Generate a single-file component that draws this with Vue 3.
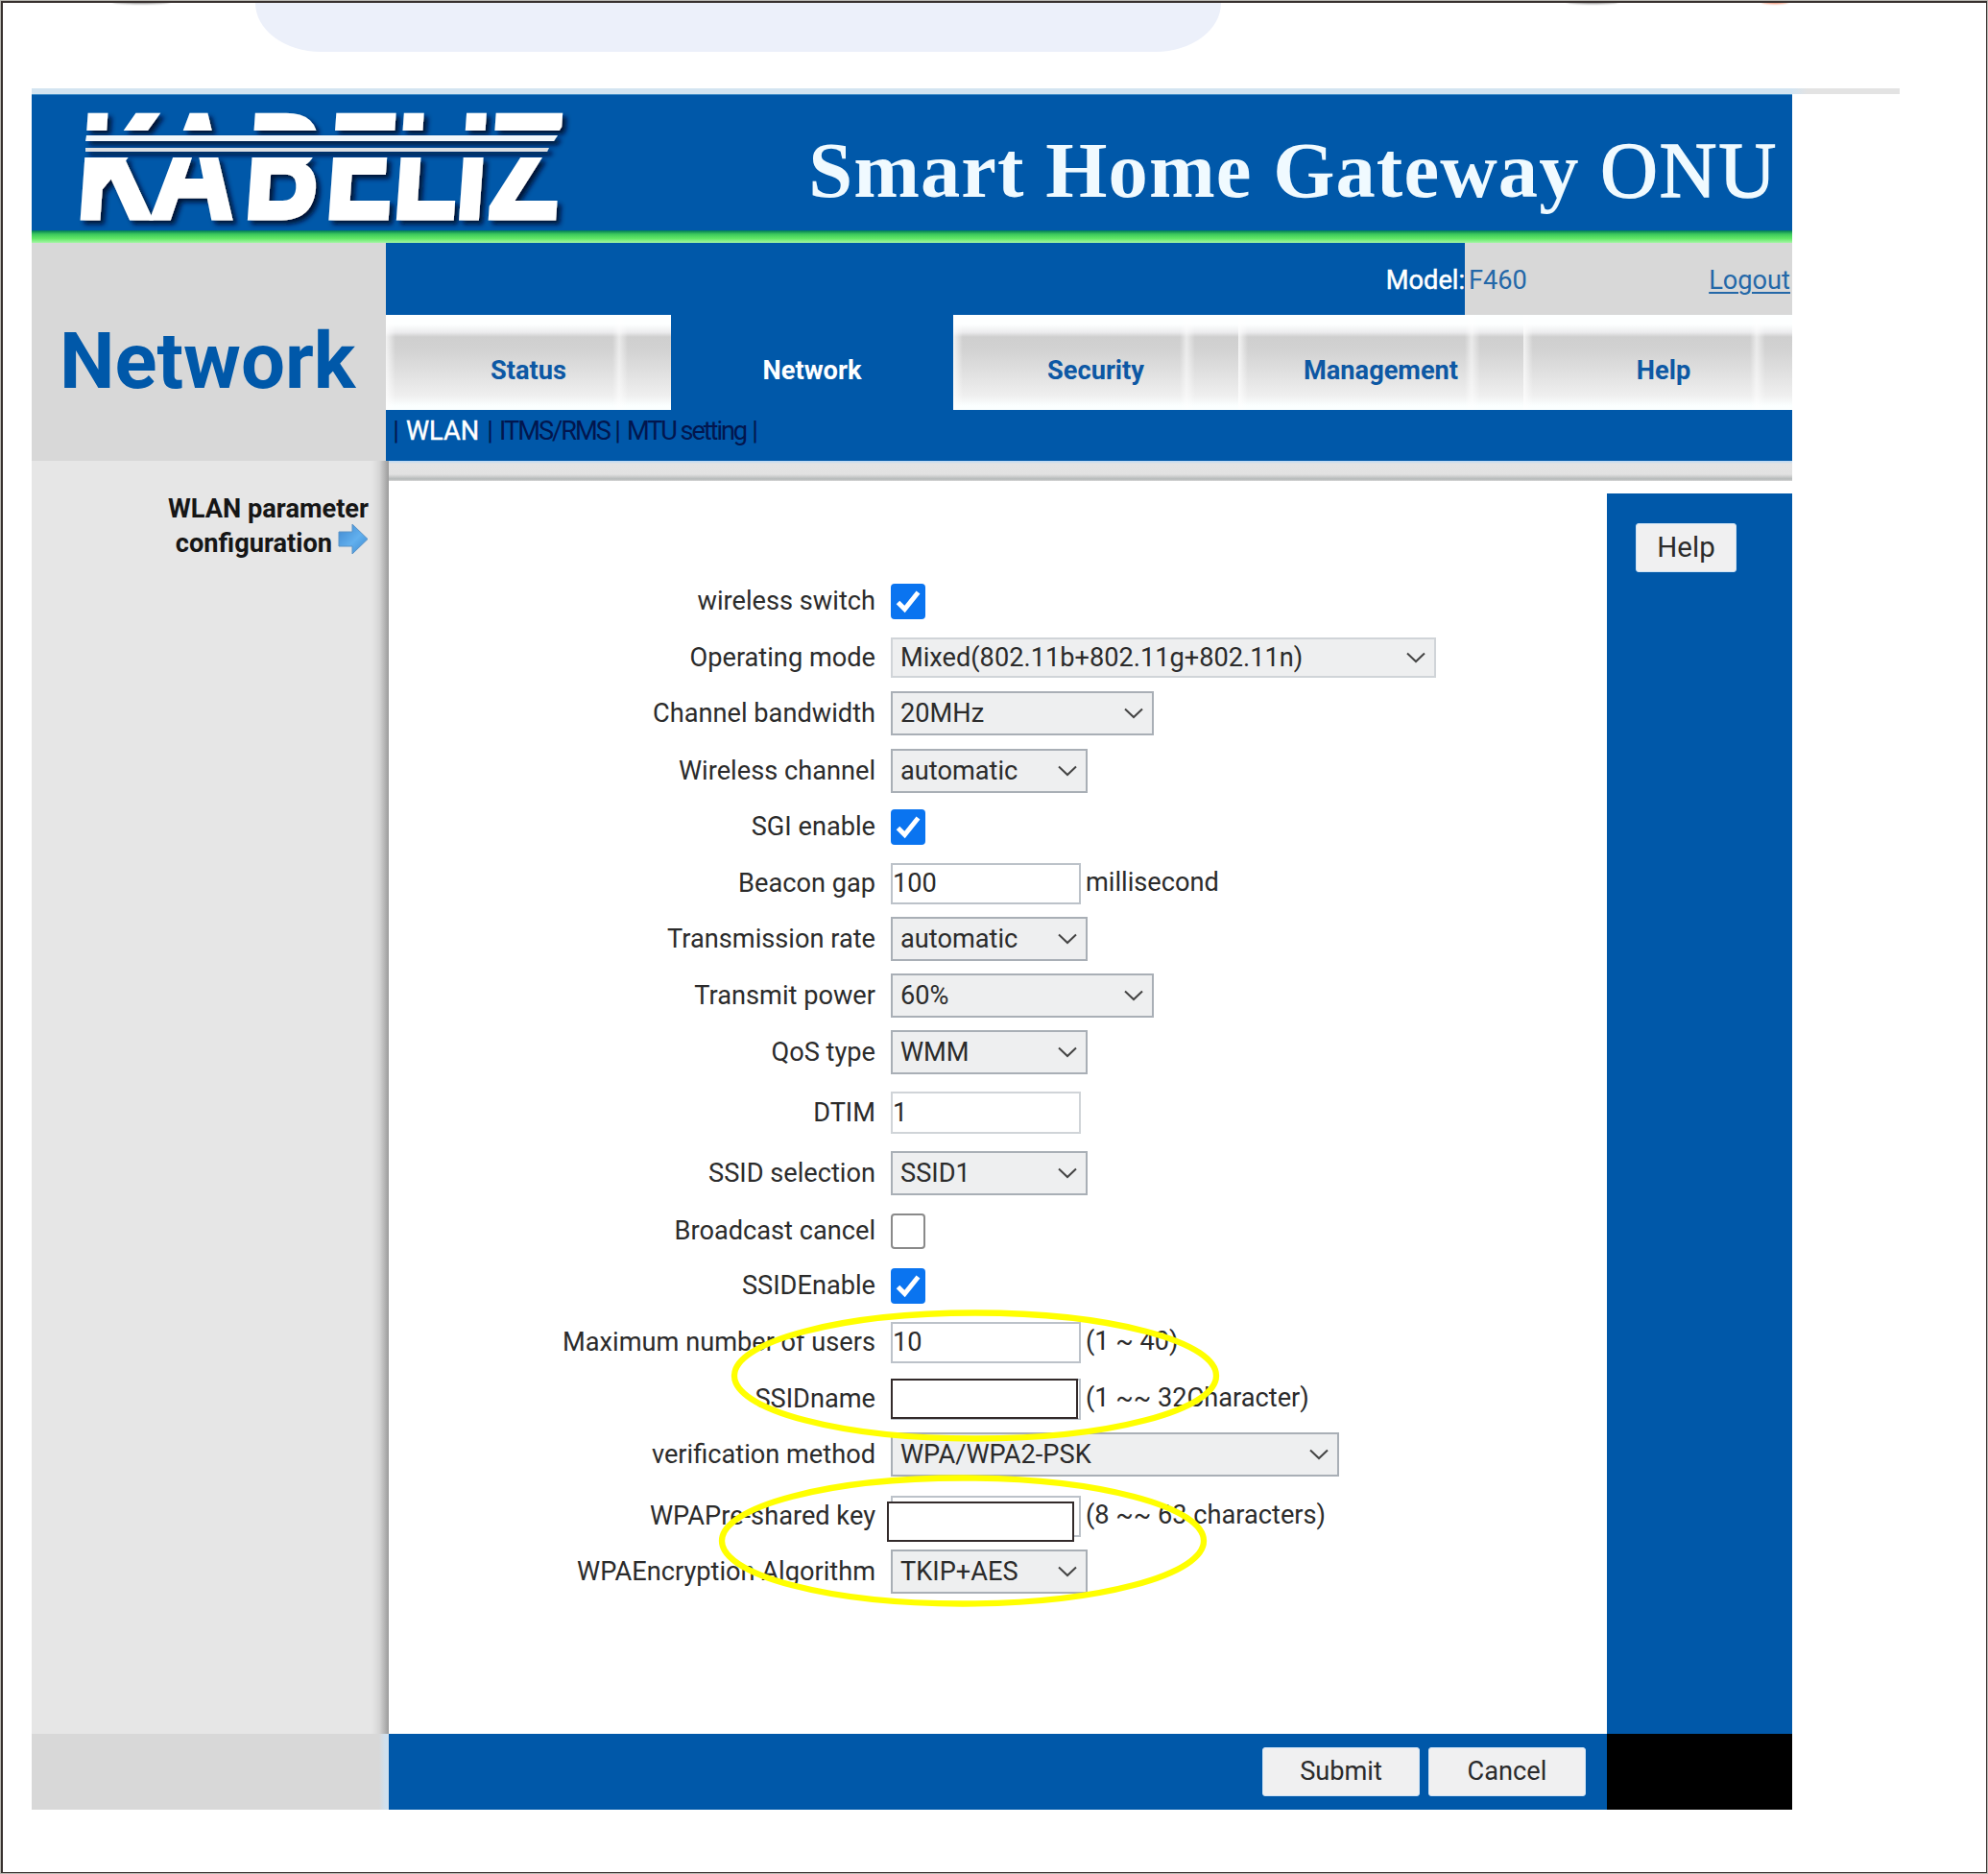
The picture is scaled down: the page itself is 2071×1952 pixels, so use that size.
<script setup>
const tabs = [
  { name: 'Status' },
  { name: 'Network', active: true },
  { name: 'Security' },
  { name: 'Management' },
  { name: 'Help' },
]

// gap: space above the row; every row is 46px tall
const rows = [
  { label: 'wireless switch', type: 'check', on: true, gap: 0 },
  { label: 'Operating mode', type: 'select', value: 'Mixed(802.11b+802.11g+802.11n)', width: 568, height: 42, gap: 13, soft: true },
  { label: 'Channel bandwidth', type: 'select', value: '20MHz', width: 274, gap: 12 },
  { label: 'Wireless channel', type: 'select', value: 'automatic', width: 205, gap: 14 },
  { label: 'SGI enable', type: 'check', on: true, gap: 12 },
  { label: 'Beacon gap', type: 'input', value: '100', note: 'millisecond', gap: 13 },
  { label: 'Transmission rate', type: 'select', value: 'automatic', width: 205, gap: 12 },
  { label: 'Transmit power', type: 'select', value: '60%', width: 274, gap: 13 },
  { label: 'QoS type', type: 'select', value: 'WMM', width: 205, gap: 13 },
  { label: 'DTIM', type: 'input', value: '1', height: 44, gap: 17, soft: true },
  { label: 'SSID selection', type: 'select', value: 'SSID1', width: 205, gap: 17 },
  { label: 'Broadcast cancel', type: 'check', on: false, gap: 14 },
  { label: 'SSIDEnable', type: 'check', on: true, gap: 11 },
  { label: 'Maximum number of users', type: 'input', value: '10', note: '(1 ~ 40)', gap: 13 },
  { label: 'SSIDname', type: 'input', value: '', note: '(1 ~~ 32Character)', gap: 13 },
  { label: 'verification method', type: 'select', value: 'WPA/WPA2-PSK', width: 467, gap: 12 },
  { label: 'WPAPre-shared key', type: 'input', value: '', note: '(8 ~~ 63 characters)', gap: 18 },
  { label: 'WPAEncryption Algorithm', type: 'select', value: 'TKIP+AES', width: 205, gap: 12 },
]

function controlSize(row) {
  return {
    width: (row.width || 198) + 'px',
    height: (row.height || (row.type === 'select' ? 46 : 43)) + 'px',
  }
}
</script>

<template>
  <div class="frame">
    <div class="chrome">
      <div class="omnibox"></div>
      <i class="smudge s1"></i>
      <i class="smudge s2"></i>
      <i class="smudge s3"></i>
    </div>
    <div class="rule"></div>

    <div class="site">
      <header class="banner">
        <svg class="logo" width="560" height="141" viewBox="0 0 560 141">
          <defs>
            <clipPath id="bands">
              <rect x="0" y="18" width="560" height="19" />
              <rect x="0" y="65" width="560" height="66" />
            </clipPath>
            <filter id="cast" x="-5%" y="-10%" width="110%" height="130%">
              <feDropShadow dx="4" dy="4" stdDeviation="2.6" flood-color="#00112e" flood-opacity="0.95" />
            </filter>
          </defs>
          <g filter="url(#cast)" fill="#fff">
            <g clip-path="url(#bands)">
              <text class="wordmark" transform="translate(0 128.5) skewX(-4.1) scale(.82 1)" x="8.5 106 221 324 410 488 531" y="0">KABELIZ</text>
            </g>
            <path d="M20 42H511L507 48H19Z" fill="#f2f7fb" />
            <path d="M19 55H502L500 59H19Z" fill="#dcdfe2" />
          </g>
        </svg>
        <h1>Smart Home Gateway <span class="onu">ONU</span></h1>
      </header>
      <div class="green"></div>

      <div class="top">
        <div class="section-title">Network</div>
        <div class="nav">
          <div class="info">
            <div class="model">Model:</div>
            <div class="account">
              <span>F460</span>
              <a>Logout</a>
            </div>
          </div>
          <div class="tabs">
            <div v-for="t in tabs" :key="t.name" class="tab" :class="{ active: t.active }">{{ t.name }}</div>
          </div>
          <div class="subnav">
            <span class="bar">|</span><span class="current">WLAN</span><span class="bar">|</span><span class="tight itms">ITMS/RMS</span><span class="bar">|</span><span class="tight mtu">MTU setting</span><span class="bar">|</span>
          </div>
        </div>
      </div>

      <div class="body">
        <aside class="side">
          <div class="side-item">WLAN parameter</div>
          <div class="side-item">
            configuration
            <svg width="32" height="33" viewBox="0 0 32 33">
              <defs>
                <linearGradient id="arrow" x1="0" x2="1" y1="0" y2="1">
                  <stop offset="0" stop-color="#3f87cf" />
                  <stop offset=".55" stop-color="#62b0ee" />
                  <stop offset="1" stop-color="#3a86cd" />
                </linearGradient>
              </defs>
              <path d="M1 9H15V1L31 16.500L15 32V24H1Z" fill="url(#arrow)" stroke="#5b93c6" stroke-width="1" />
            </svg>
          </div>
        </aside>
        <div class="main">
          <div class="band"></div>
          <div class="columns">
            <div class="form">
              <div v-for="r in rows" :key="r.label" class="row" :style="{ marginTop: r.gap + 'px' }">
                <div class="label">{{ r.label }}</div>
                <span v-if="r.type === 'check'" class="check" :class="{ on: r.on }">
                  <svg v-if="r.on" width="36" height="37" viewBox="0 0 36 37">
                    <path d="M7.500 19.500L14.500 26.500L28.500 9" fill="none" stroke="#fff" stroke-width="5" />
                  </svg>
                </span>
                <span v-else-if="r.type === 'select'" class="select" :class="{ soft: r.soft }" :style="controlSize(r)">
                  <span>{{ r.value }}</span>
                  <svg width="20" height="12" viewBox="0 0 20 12">
                    <path d="M1 1.500L10 10L19 1.500" fill="none" stroke="#444" stroke-width="2" />
                  </svg>
                </span>
                <span v-else class="input" :class="{ soft: r.soft }" :style="controlSize(r)">{{ r.value }}</span>
                <span v-if="r.note" class="note">{{ r.note }}</span>
              </div>
            </div>
            <div class="help-col">
              <div class="btn help">Help</div>
            </div>
          </div>
        </div>
      </div>

      <footer class="foot">
        <div class="foot-left"></div>
        <div class="actions">
          <div class="btn">Submit</div>
          <div class="btn">Cancel</div>
        </div>
        <div class="foot-right"></div>
      </footer>
    </div>

    <!-- annotations over the page -->
    <div class="cover c1"></div>
    <div class="cover c2"></div>
    <svg class="ring r1" width="510" height="140" viewBox="0 0 510 140">
      <ellipse cx="255" cy="70" rx="251" ry="65.500" />
    </svg>
    <svg class="ring r2" width="510" height="140" viewBox="0 0 510 140">
      <ellipse cx="255" cy="70" rx="251" ry="65.500" />
    </svg>
  </div>
</template>

<style>
body {
  background: #fff;
}
</style>

<style scoped>
* {
  box-sizing: border-box;
}
.frame {
  position: relative;
  width: 2071px;
  height: 1952px;
  overflow: hidden;
  background: #fff;
  border: 3px solid #37302e;
  border-width: 3px 2px 2px 3px;
  outline: 1px solid #b9b8b2;
  outline-offset: -1px;
  font-family: Roboto, sans-serif;
  font-size: 27.200px;
  color: #2b2b2b;
  white-space: nowrap;
}
.chrome {
  position: relative;
  height: 89px;
  overflow: hidden;
}
.omnibox {
  width: 1006px;
  height: 51px;
  margin-left: 263px;
  background: #ecf0fa;
  border-radius: 0 0 88px 88px / 0 0 66px 66px;
}
.smudge {
  position: absolute;
  top: -4px;
  height: 5px;
  border-radius: 50%;
  background: #8a8a8a;
  filter: blur(1px);
}
.s1 { left: 114px; width: 60px; }
.s2 { left: 1629px; width: 54px; }
.s3 { left: 1832px; width: 28px; background: #f0825e; }
.rule {
  height: 6px;
  width: 1946px;
  margin-left: 30px;
  background: linear-gradient(90deg, #d3e4f1 1834px, #e3e3e3 1850px);
}
.site {
  width: 1834px;
  margin-left: 30px;
}
.banner {
  display: flex;
  justify-content: space-between;
  height: 142px;
  padding: 0 15px 0 37px;
  background: #0058a9;
  border-top: 1px solid #3f8cc6;
}
.logo {
  display: block;
}
.wordmark {
  font: 700 153px Roboto, sans-serif;
  stroke: #fff;
  stroke-width: 3px;
}
h1 {
  margin: 0;
  padding-top: 31px;
  font: 700 82.500px/94px "Liberation Serif", serif;
  letter-spacing: 1.100px;
  color: #f0faff;
}
.onu {
  font-weight: 400;
  letter-spacing: 2px;
  -webkit-text-stroke: 1.600px #f0faff;
}
.green {
  height: 13px;
  background: linear-gradient(#007a58, #3cc85c 30%, #62e866 65%, #a4f6a4);
}
.top {
  display: flex;
  height: 227px;
}
.section-title {
  width: 369px;
  padding: 76px 0 0 29px;
  background: #d8d8d8;
  color: #0058a9;
  font-size: 81.500px;
  line-height: 94px;
  font-weight: 700;
}
.nav {
  width: 1465px;
  background: #0058a9;
}
.info {
  display: flex;
  height: 75px;
  line-height: 79px;
}
.model {
  width: 1124px;
  text-align: right;
  color: #fff;
  -webkit-text-stroke: 0.500px #fff;
}
.account {
  flex: 1;
  display: flex;
  justify-content: space-between;
  padding: 0 2px 0 4px;
  background: #d8d8d8;
  color: #2468a8;
}
.account a {
  text-decoration: underline;
  text-decoration-thickness: 2px;
  text-underline-offset: 3px;
}
.tabs {
  display: flex;
  height: 99px;
  overflow: hidden;
}
.tab {
  flex: 0 0 297px;
  padding-top: 1px;
  line-height: 115px;
  text-align: center;
  font-weight: 700;
  color: #0d58a4;
  background:
    linear-gradient(90deg, #ffffffc0 0, #fff0 10px, #fff0 236px, #ffffff90 243px, #fff0 252px, #fff0 100%),
    linear-gradient(#fdffff 0 10px, #ececee 18px, #cfcfcf 23px, #d2d2d2 36px, #e0e0e0 60px, #efefef 84px, #fbffff 95px);
}
.tab.active {
  flex-basis: 294px;
  background: #0058a9;
  color: #fff;
}
.tab:last-child {
  padding-right: 5px;
}
.subnav {
  display: flex;
  height: 53px;
  padding-left: 7px;
  line-height: 45px;
  color: #02164e;
}
.subnav .bar {
  width: 7px;
  text-align: center;
}
.current {
  width: 76px;
  margin: 0 8px 0 7px;
  color: #fff;
  -webkit-text-stroke: 0.400px #fff;
}
.itms {
  width: 116px;
  margin: 0 4px 0 6px;
  letter-spacing: -2px;
}
.mtu {
  width: 126px;
  margin: 0 4px 0 6px;
  letter-spacing: -2.100px;
}
.body {
  display: flex;
  height: 1326px;
}
.side {
  width: 372px;
  padding: 32px 21px 0 0;
  font-weight: 700;
  color: #161616;
  background: linear-gradient(90deg, #e6e6e6 354px, #d6d6d6 362px, #9b9b9b 372px);
}
.side-item {
  display: flex;
  justify-content: flex-end;
  gap: 6px;
  height: 36px;
  line-height: 36px;
}
.side-item svg {
  display: block;
  margin-top: -3px;
}
.main {
  width: 1462px;
}
.band {
  height: 21px;
  background: linear-gradient(#b9d8f5, #e3e3e3 3px, #e2e2e2 14px, #b4b8b8 19px, #d9d9d9 21px);
}
.columns {
  display: flex;
  height: 1305px;
}
.form {
  width: 1269px;
  padding-top: 102px;
}
.row {
  display: flex;
  align-items: center;
  height: 46px;
}
.label {
  width: 507px;
  margin-right: 16px;
  text-align: right;
}
.check {
  display: block;
  width: 36px;
  height: 37px;
  border: 2px solid #8a8a8a;
  border-radius: 4px;
  background: #fff;
}
.check.on {
  border: 0;
  background: #0a74f0;
}
.check svg {
  display: block;
}
.select,
.input {
  display: flex;
  align-items: center;
  justify-content: space-between;
  border: 2px solid #a9afb6;
}
.select {
  padding: 0 9px 0 8px;
  background: #eeeff0;
}
.input {
  padding-left: 0;
  background: #fff;
  border-color: #bcc2c9;
}
.soft {
  border-color: #d0d4d8;
}
.note {
  margin: -3px 0 0 5px;
}
.help-col {
  width: 193px;
  margin-top: 13px;
  padding: 31px 0 0 30px;
  background: #0058a9;
}
.btn {
  width: 164px;
  height: 51px;
  line-height: 49px;
  text-align: center;
  background: #f0f0f1;
  border: 1px solid #cfe3f5;
  border-radius: 3px;
}
.btn.help {
  width: 105px;
  font-size: 29.500px;
}
.foot {
  display: flex;
  height: 79px;
}
.foot-left {
  width: 372px;
  background: linear-gradient(90deg, #d8d8d8 362px, #d0e0ee 368px);
}
.actions {
  display: flex;
  justify-content: flex-end;
  gap: 9px;
  width: 1269px;
  padding: 14px 22px 0 0;
  background: #0058a9;
}
.foot-right {
  width: 193px;
  background: #000;
}
.cover {
  position: absolute;
  width: 195px;
  height: 42px;
  background: #fff;
  border: 2px solid #332b2b;
}
.c1 { left: 925px; top: 1433px; }
.c2 { left: 921px; top: 1561px; }
.ring {
  position: absolute;
}
.ring ellipse {
  fill: none;
  stroke: #ff0;
  stroke-width: 6.300px;
}
.r1 { left: 758px; top: 1360px; }
.r2 { left: 745px; top: 1532px; }
</style>
